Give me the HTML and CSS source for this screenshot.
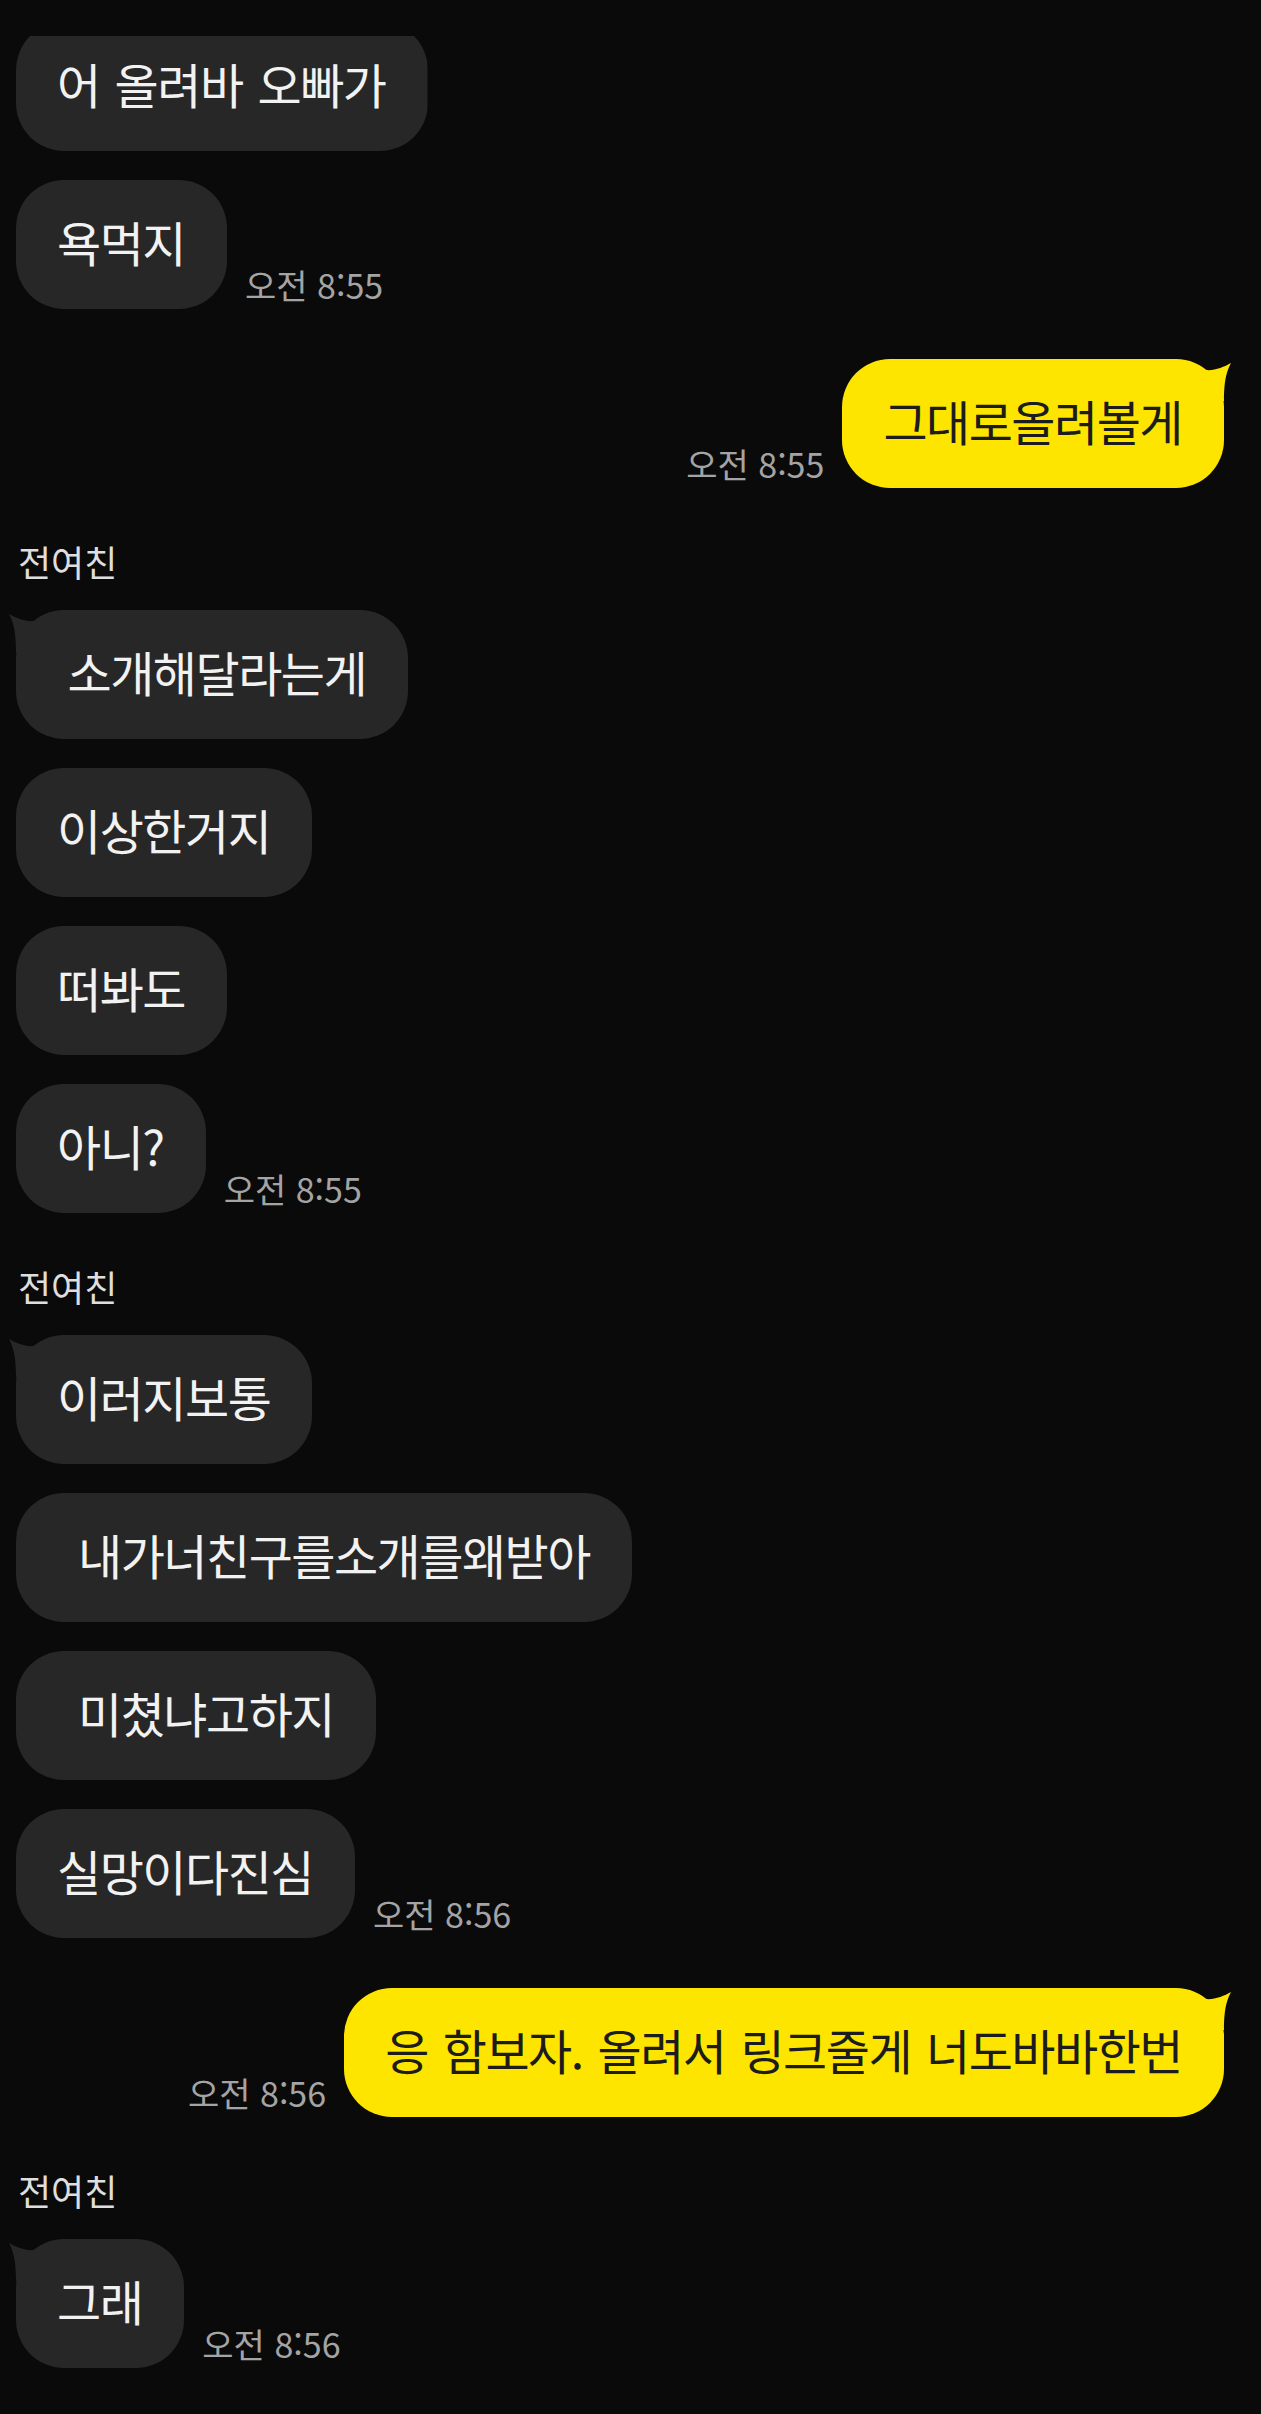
FILE: index.html
```html
<!DOCTYPE html>
<html lang="ko">
<head>
    <meta charset="UTF-8">
    <meta name="viewport" content="width=device-width, initial-scale=1.0">
    <title>전여친</title>
    <link rel="stylesheet" href="styles.css">
</head>
<body>
    <div class="chat">
        <div class="row in first">
            <div class="bubble cut">어 올려바 오빠가</div>
        </div>
        <div class="row in">
            <div class="bubble">욕먹지</div>
            <span class="time">오전 8:55</span>
        </div>

        <div class="row out">
            <span class="time">오전 8:55</span>
            <div class="bubble mine">그대로올려볼게<svg class="tail" viewBox="-30 0 40 50"><path d="M7 4 C3 12 0 20 0 42 L-18 42 L-18 11 C-10 12 0 8 7 4 Z"/></svg></div>
        </div>

        <div class="name">전여친</div>
        <div class="row in">
            <div class="bubble">&#8197;소개해달라는게<svg class="tail" viewBox="-10 0 40 50"><path d="M-7 4 C-3 12 0 20 0 42 L18 42 L18 11 C10 12 0 8 -7 4 Z"/></svg></div>
        </div>
        <div class="row in">
            <div class="bubble">이상한거지</div>
        </div>
        <div class="row in">
            <div class="bubble">떠봐도</div>
        </div>
        <div class="row in">
            <div class="bubble">아니?</div>
            <span class="time">오전 8:55</span>
        </div>

        <div class="name">전여친</div>
        <div class="row in">
            <div class="bubble">이러지보통<svg class="tail" viewBox="-10 0 40 50"><path d="M-7 4 C-3 12 0 20 0 42 L18 42 L18 11 C10 12 0 8 -7 4 Z"/></svg></div>
        </div>
        <div class="row in">
            <div class="bubble">&#8197;&#8197;내가너친구를소개를왜받아</div>
        </div>
        <div class="row in">
            <div class="bubble">&#8197;&#8197;미쳤냐고하지</div>
        </div>
        <div class="row in">
            <div class="bubble">실망이다진심</div>
            <span class="time">오전 8:56</span>
        </div>

        <div class="row out">
            <span class="time">오전 8:56</span>
            <div class="bubble mine">응 함보자. 올려서 링크줄게 너도바바한번<svg class="tail" viewBox="-30 0 40 50"><path d="M7 4 C3 12 0 20 0 42 L-18 42 L-18 11 C-10 12 0 8 7 4 Z"/></svg></div>
        </div>

        <div class="name">전여친</div>
        <div class="row in">
            <div class="bubble">그래<svg class="tail" viewBox="-10 0 40 50"><path d="M-7 4 C-3 12 0 20 0 42 L18 42 L18 11 C10 12 0 8 -7 4 Z"/></svg></div>
            <span class="time">오전 8:56</span>
        </div>
    </div>
</body>
</html>
```

FILE: styles.css
```css
* {
    margin: 0;
    padding: 0;
    box-sizing: border-box;
}

body {
    min-height: 100vh;
    background: #0a0a0a;
    font-family: "Noto Sans CJK KR", "Noto Sans", sans-serif;
    color: #f2f2f2;
}

/* 대화 목록 */
.chat {
    padding: 22px 37px 40px 16px;
}

.row {
    display: flex;
    align-items: flex-end;
    gap: 18px;
    margin-top: 29px;
}

.row.first {
    margin-top: 0;
}

.row.out {
    justify-content: flex-end;
    margin-top: 50px;
}

.name {
    margin-top: 53px;
    padding-left: 2px;
    font-size: 36px;
    line-height: 40px;
    color: #dedede;
}

.name + .row {
    margin-top: 29px;
}

/* 말풍선 */
.bubble {
    position: relative;
    height: 129px;
    padding: 0 42px 6px 41px;
    border-radius: 48px;
    background: #272727;
    font-size: 48px;
    line-height: 123px;
    letter-spacing: -1.5px;
    word-spacing: 3px;
    white-space: pre;
}

.bubble.cut {
    clip-path: inset(14px 0 0 0);
}

.bubble.mine {
    background: #fee500;
    color: #1c1c1c;
}

.tail {
    position: absolute;
    top: 0;
    left: -10px;
    width: 40px;
    height: 50px;
    fill: #272727;
}

.mine .tail {
    left: auto;
    right: -10px;
    fill: #fee500;
}

.time {
    margin-bottom: 7px;
    font-size: 34px;
    line-height: 34px;
    color: #a4a4a4;
    white-space: nowrap;
}
```
